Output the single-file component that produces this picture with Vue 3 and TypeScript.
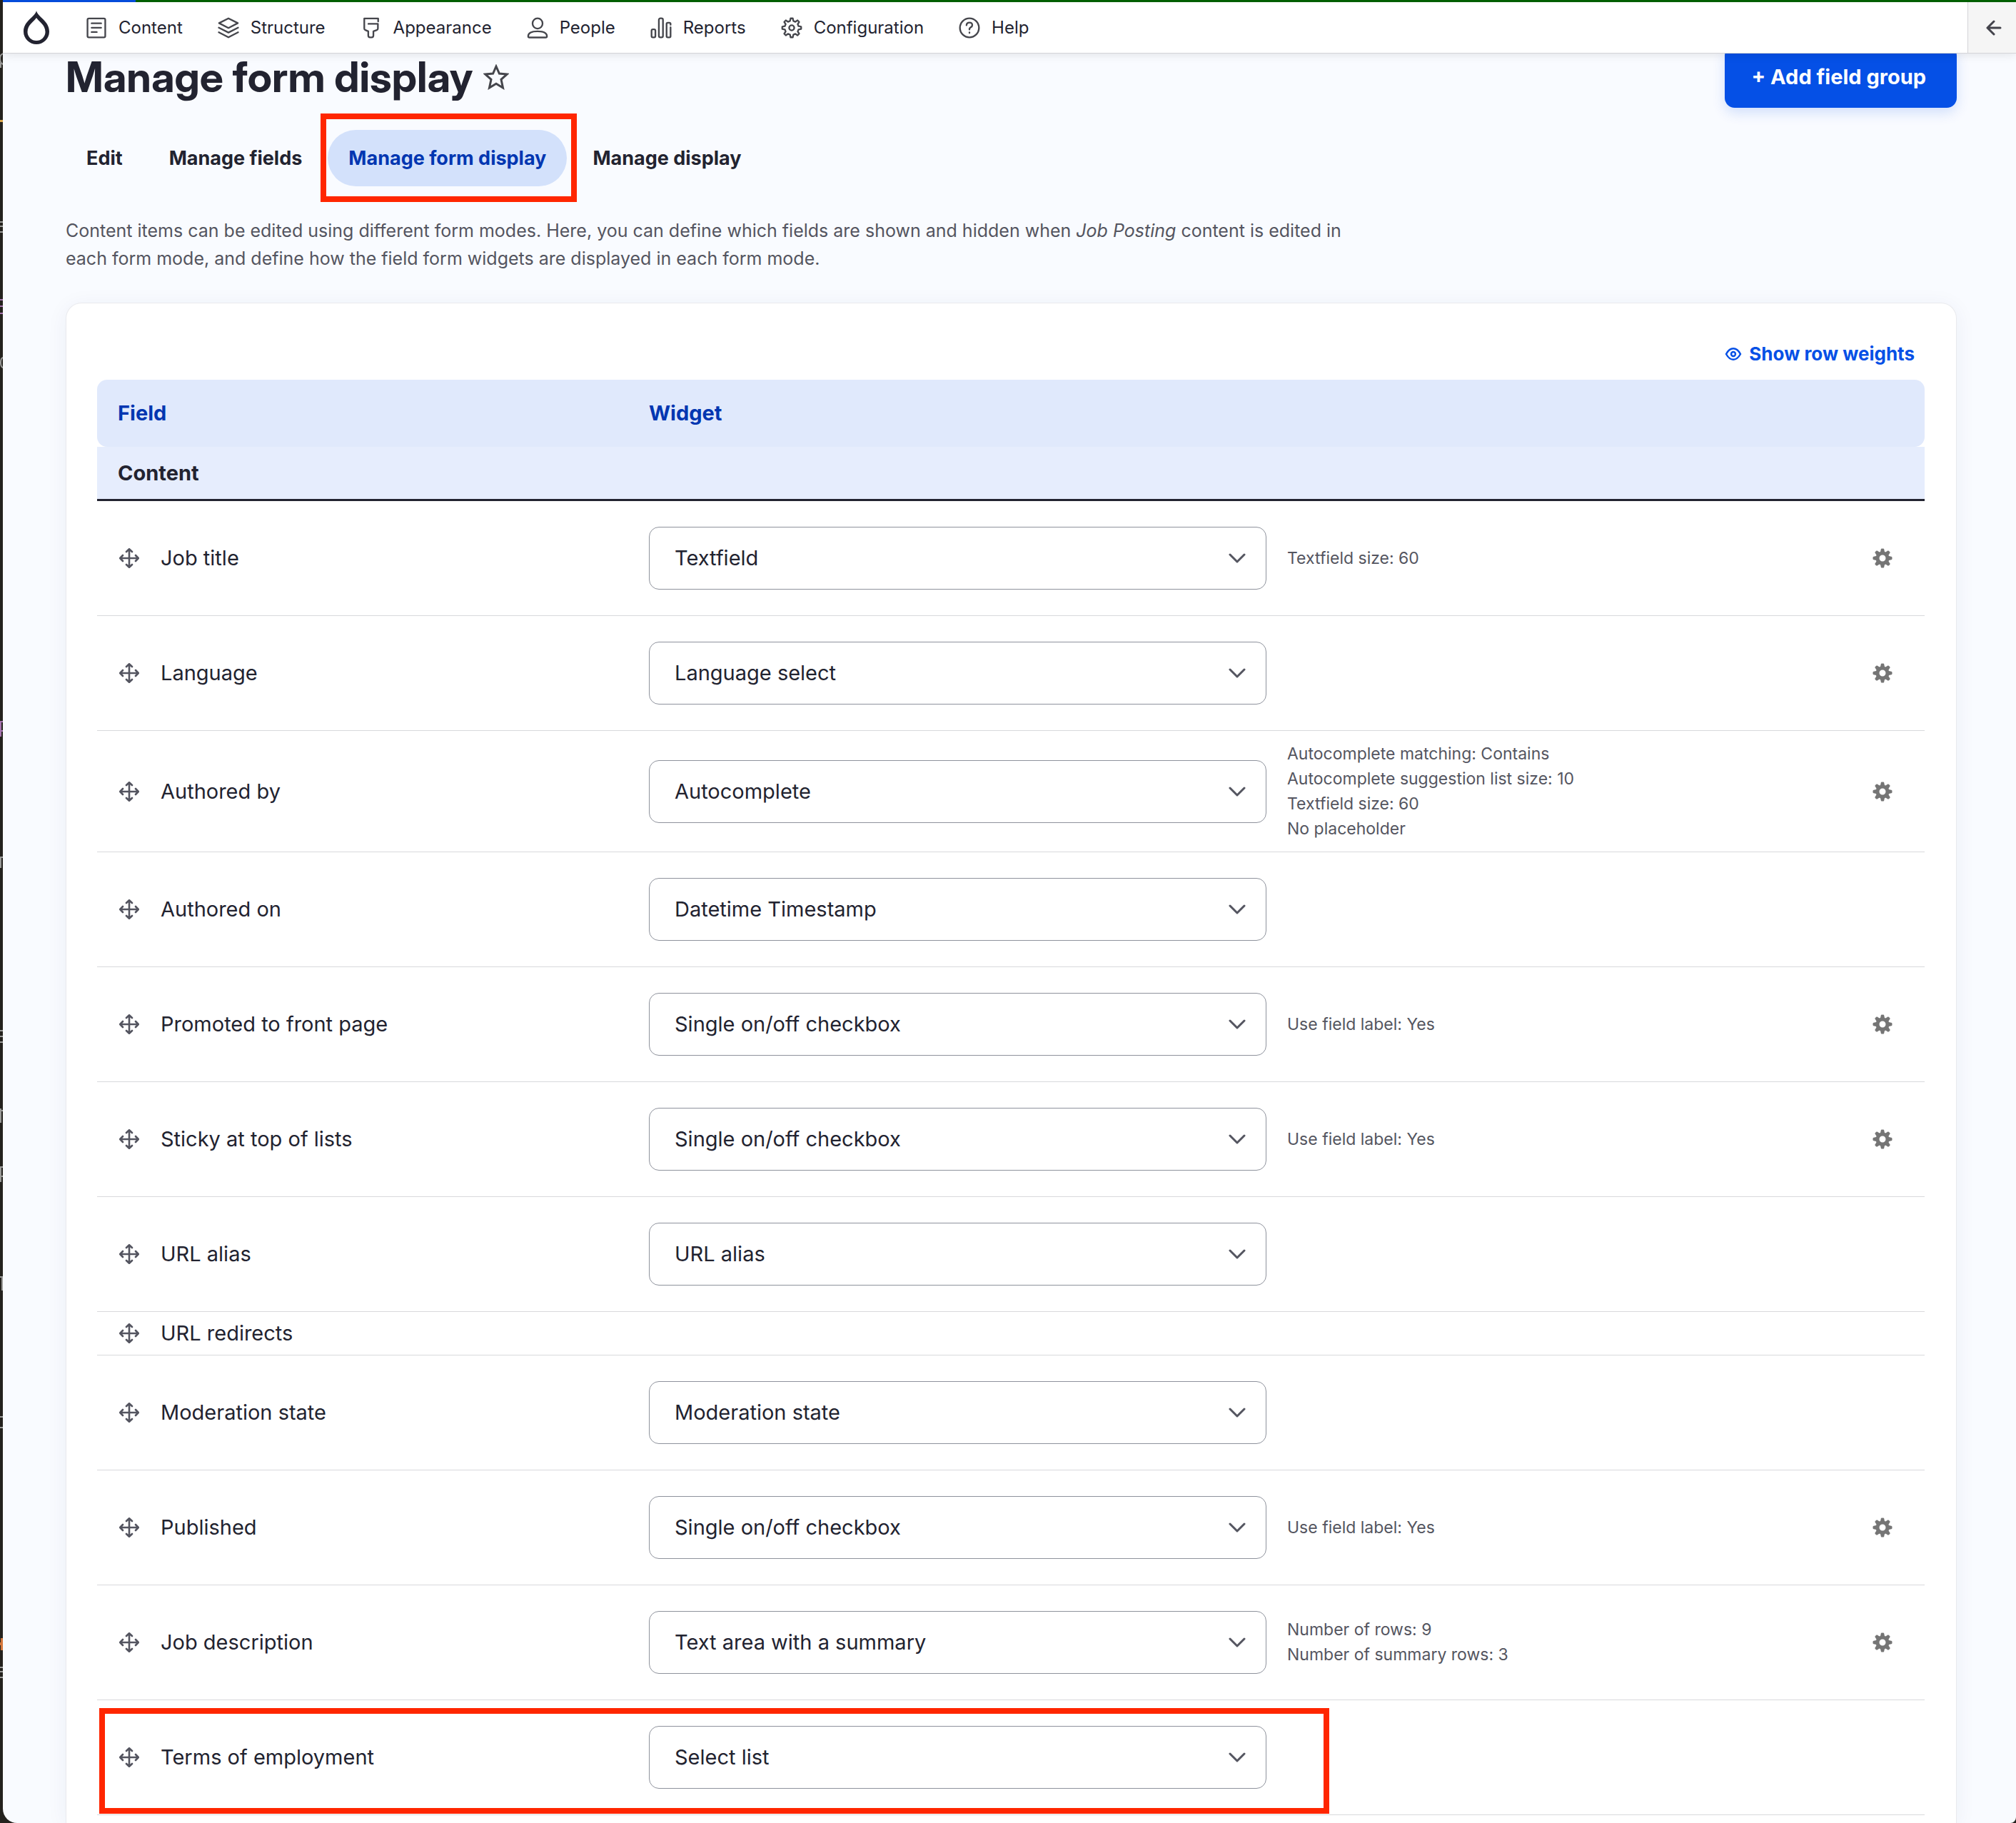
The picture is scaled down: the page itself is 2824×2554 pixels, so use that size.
<script setup lang="ts">
import { ref } from 'vue'

interface NavItem {
  id: string
  label: string
}

interface Tab {
  label: string
  active?: boolean
}

interface FieldRow {
  id: string
  label: string
  widget?: string
  summary?: string[]
  configurable?: boolean
  marked?: boolean
  size?: 'tall' | 'short'
}

const navItems: NavItem[] = [
  { id: 'content', label: 'Content' },
  { id: 'structure', label: 'Structure' },
  { id: 'appearance', label: 'Appearance' },
  { id: 'people', label: 'People' },
  { id: 'reports', label: 'Reports' },
  { id: 'configuration', label: 'Configuration' },
  { id: 'help', label: 'Help' },
]

const tabs: Tab[] = [
  { label: 'Edit' },
  { label: 'Manage fields' },
  { label: 'Manage form display', active: true },
  { label: 'Manage display' },
]

const rows = ref<FieldRow[]>([
  { id: 'title', label: 'Job title', widget: 'Textfield', summary: ['Textfield size: 60'], configurable: true },
  { id: 'langcode', label: 'Language', widget: 'Language select', configurable: true },
  {
    id: 'uid',
    label: 'Authored by',
    widget: 'Autocomplete',
    summary: [
      'Autocomplete matching: Contains',
      'Autocomplete suggestion list size: 10',
      'Textfield size: 60',
      'No placeholder',
    ],
    configurable: true,
    size: 'tall',
  },
  { id: 'created', label: 'Authored on', widget: 'Datetime Timestamp' },
  { id: 'promote', label: 'Promoted to front page', widget: 'Single on/off checkbox', summary: ['Use field label: Yes'], configurable: true },
  { id: 'sticky', label: 'Sticky at top of lists', widget: 'Single on/off checkbox', summary: ['Use field label: Yes'], configurable: true },
  { id: 'path', label: 'URL alias', widget: 'URL alias' },
  { id: 'redirects', label: 'URL redirects', size: 'short' },
  { id: 'moderation', label: 'Moderation state', widget: 'Moderation state' },
  { id: 'status', label: 'Published', widget: 'Single on/off checkbox', summary: ['Use field label: Yes'], configurable: true },
  {
    id: 'body',
    label: 'Job description',
    widget: 'Text area with a summary',
    summary: ['Number of rows: 9', 'Number of summary rows: 3'],
    configurable: true,
  },
  { id: 'terms', label: 'Terms of employment', widget: 'Select list', marked: true },
])

// Outline of a gear: each tooth is a flat top joined to the next by a flat valley.
function gearOutline(teeth: number, outer: number, inner: number): string {
  const step = (Math.PI * 2) / teeth
  const points: string[] = []
  for (let i = 0; i < teeth; i++) {
    const a = i * step - Math.PI / 2
    const corners: [number, number][] = [
      [outer, -0.15],
      [outer, 0.15],
      [inner, 0.3],
      [inner, 0.7],
    ]
    for (const [r, t] of corners) {
      points.push(`${(10 + r * Math.cos(a + t * step)).toFixed(2)} ${(10 + r * Math.sin(a + t * step)).toFixed(2)}`)
    }
  }
  return `M${points.join('L')}Z`
}

const gearPath = gearOutline(8, 7.4, 5.5)
const toothAngles = [0, 45, 90, 135, 180, 225, 270, 315]
</script>

<template>
  <div class="desktop">
    <svg class="backdrop" width="4" height="2400" viewBox="0 0 4 2400" fill="none" stroke-width="2" aria-hidden="true">
      <g stroke="#9a9a98">
        <path d="M5 75Q0 76 0 82T4 90M1 88V95" />
        <path d="M4 311H0M0 317H4M0 325H4" />
        <path d="M4 501Q1 502 1 508T4 515" />
        <path d="M0 1201H4M1 1201V1216" />
        <path d="M4 1444H0M0 1452H4M0 1460H4" />
        <path d="M0 1556H4M1 1553V1573" />
        <path d="M4 1635H1V1656M1 1648H4" />
        <path d="M0 1789H3V1808" />
        <path d="M4 1985H0M0 2000H4" />
        <path d="M4 2336H0M0 2342H4M0 2350H4" />
      </g>
      <path stroke="#d9a44a" stroke-width="3" d="M0 169.500H4" />
      <path stroke="#a574ae" d="M0 420H4M0 429H4M0 439H4M4 1011H1V1032M1 1024H4" />
      <path stroke="#d5773c" stroke-width="4" d="M0 2303H4M3 2295V2312" />
    </svg>

    <div class="window">
      <div class="progress"><span class="progress-done"></span></div>

      <header class="toolbar">
        <a class="logo" href="#" aria-label="Home">
          <svg width="36" height="47" viewBox="0 0 36 47" aria-hidden="true">
            <path
              fill="#222330"
              fill-rule="evenodd"
              d="M18 0C20 9 36 14 36 29.200A18 17.800 0 0 1 0 29.200C0 14 16 9 18 0ZM18 10C15 15 5.500 19.500 5.500 29.800A12.500 12.200 0 0 0 30.500 29.800C30.500 19.500 21 15 18 10Z"
            />
          </svg>
        </a>
        <nav class="nav" aria-label="Administration">
          <a v-for="item in navItems" :key="item.id" class="nav-item" href="#">
            <svg class="nav-icon" viewBox="0 0 20 20" aria-hidden="true">
              <template v-if="item.id === 'content'">
                <rect x="3.100" y="2.700" width="13.800" height="14.700" rx="1" />
                <path d="M6.300 6.500h7.400M6.300 9.900h7.400M6.300 13.300h4" />
              </template>
              <template v-else-if="item.id === 'structure'">
                <path d="M10 2.600L17.300 6.300L10 10.100L2.700 6.300Z" />
                <path d="M2.500 9.900L10 13.700L17.500 9.900M2.500 13.500L10 17.400L17.500 13.500" />
              </template>
              <path
                v-else-if="item.id === 'appearance'"
                d="M15.400 5V2.700H4.600V10.500Q4.600 11.400 5.500 11.700L7.700 12.700V16Q7.700 17.400 9 17.400H10.400Q11.700 17.400 11.700 16V12.700L14.300 11.700Q15.200 11.400 15.200 10.500V6.900H7.800"
              />
              <template v-else-if="item.id === 'people'">
                <ellipse cx="10" cy="6.600" rx="3.900" ry="4" />
                <path d="M2.700 16.500C2.700 13.800 6 12.700 10 12.700S17.300 13.800 17.300 16.500Q17.300 17.500 16.300 17.500H3.700Q2.700 17.500 2.700 16.500Z" />
              </template>
              <template v-else-if="item.id === 'reports'">
                <rect x="2.600" y="11.200" width="3" height="6.200" rx="1" />
                <rect x="8.300" y="2.600" width="3.200" height="14.800" rx="1.200" />
                <path d="M17.400 7.600V6.900Q17.400 6 16.500 6H15.200Q14.300 6 14.300 6.900V16.500Q14.300 17.400 15.200 17.400H16.500Q17.400 17.400 17.400 16.500V9.600" />
              </template>
              <template v-else-if="item.id === 'configuration'">
                <path :d="gearPath" />
                <circle cx="10" cy="10" r="2" />
              </template>
              <template v-else>
                <circle cx="10" cy="10" r="7.400" />
                <path d="M7.700 8Q7.800 5.900 10 5.900T12.200 7.900Q12.200 8.900 11 9.600T10 11.300" />
                <path d="M10 13.500V13.900" />
              </template>
            </svg>
            <span>{{ item.label }}</span>
          </a>
        </nav>
        <button class="collapse" type="button" aria-label="Collapse sidebar">
          <svg width="24" height="24" viewBox="0 0 24 24" aria-hidden="true">
            <path d="M21 12H3M12 3L3 12L12 21" />
          </svg>
        </button>
      </header>

      <main class="page">
        <div class="page-head">
          <h1>Manage form display</h1>
          <button class="star" type="button" aria-label="Add to shortcuts">
            <svg width="36" height="36" viewBox="0 0 36 36" aria-hidden="true">
              <path d="M18 3L22.400 13L33.300 14L25 21.300L27.500 33L18 27.300L8.500 33L11 21.300L2.700 14L13.600 13Z" />
            </svg>
          </button>
          <button class="add" type="button">+ Add field group</button>
        </div>

        <nav class="tabs" aria-label="Primary tabs">
          <a v-for="tab in tabs" :key="tab.label" class="tab" :class="{ active: tab.active }" href="#">
            {{ tab.label }}
            <span v-if="tab.active" class="mark mark-tab"></span>
          </a>
        </nav>

        <p class="intro">
          Content items can be edited using different form modes. Here, you can define which fields are shown and hidden
          when <em>Job Posting</em> content is edited in each form mode, and define how the field form widgets are
          displayed in each form mode.
        </p>

        <section class="card">
          <button class="weights" type="button">
            <svg width="24" height="24" viewBox="0 0 24 24" aria-hidden="true">
              <path d="M2 12C5 6.500 8.500 4.300 12 4.300S19 6.500 22 12C19 17.500 15.500 19.700 12 19.700S5 17.500 2 12Z" />
              <circle cx="12" cy="12" r="3" />
            </svg>
            <span>Show row weights</span>
          </button>

          <table>
            <colgroup>
              <col class="col-field" />
              <col class="col-widget" />
              <col />
              <col class="col-action" />
            </colgroup>
            <thead>
              <tr>
                <th scope="col">Field</th>
                <th scope="col" colspan="3">Widget</th>
              </tr>
            </thead>
            <tbody>
              <tr class="region">
                <td colspan="4">Content</td>
              </tr>
              <tr v-for="row in rows" :key="row.id" class="row" :class="row.size">
                <td class="field">
                  <div class="field-inner">
                    <a class="drag" href="#" :aria-label="`Move ${row.label}`">
                      <svg width="28" height="28" viewBox="0 0 28 28" aria-hidden="true">
                        <path d="M14 1.500V26.500M1.500 14H26.500M10 5L14 1.200L18 5M10 23L14 26.800L18 23M5 10L1.200 14L5 18M23 10L26.800 14L23 18" />
                      </svg>
                    </a>
                    <label v-if="row.widget" :for="`widget-${row.id}`">{{ row.label }}</label>
                    <span v-else>{{ row.label }}</span>
                  </div>
                  <span v-if="row.marked" class="mark mark-row"></span>
                </td>
                <td class="widget">
                  <div v-if="row.widget" class="select">
                    <select :id="`widget-${row.id}`">
                      <option>{{ row.widget }}</option>
                    </select>
                    <svg width="24" height="14" viewBox="0 0 24 14" aria-hidden="true">
                      <path d="M2 2L12 12L22 2" />
                    </svg>
                  </div>
                </td>
                <td class="summary">
                  <div v-for="line in row.summary" :key="line">{{ line }}</div>
                </td>
                <td class="action">
                  <button v-if="row.configurable" class="gear" type="button" :aria-label="`Edit ${row.label} settings`">
                    <svg width="28" height="28" viewBox="-14 -14 28 28" aria-hidden="true">
                      <circle r="7" fill="none" stroke="#757575" stroke-width="5" />
                      <path
                        v-for="angle in toothAngles"
                        :key="angle"
                        fill="#757575"
                        d="M-3.200 -8L-2 -13.200Q0 -14 2 -13.200L3.200 -8Z"
                        :transform="`rotate(${angle})`"
                      />
                    </svg>
                  </button>
                </td>
              </tr>
            </tbody>
          </table>
        </section>
      </main>
    </div>
  </div>
</template>

<style>
body {
  margin: 0;
  background: #24221e;
}
</style>

<style scoped>
* {
  box-sizing: border-box;
}

.desktop {
  position: relative;
  min-height: 100vh;
  padding-left: 4px;
  background: #24221e;
  color: #222330;
  font-family: Inter, "Liberation Sans", sans-serif;
  font-size: 29px;
  line-height: 44px;
}

.backdrop {
  position: absolute;
  top: 0;
  left: 0;
}

a {
  color: inherit;
  text-decoration: none;
}

button,
select {
  margin: 0;
  border: 0;
  padding: 0;
  background: none;
  color: inherit;
  font: inherit;
}

svg {
  display: block;
  flex: none;
}

.window {
  min-height: 100vh;
  border-radius: 0 0 8px 20px;
  overflow: hidden;
  background: #f9fbff;
}

.progress {
  height: 3px;
  background: #006400;
}

.progress-done {
  display: block;
  width: 186px;
  height: 3px;
  background: #0550e6;
}

.toolbar {
  position: relative;
  z-index: 2;
  display: flex;
  align-items: center;
  height: 72px;
  border-bottom: 1px solid #d4d4d8;
  padding-left: 29px;
  background: #fff;
  box-shadow: 0 0 14px rgba(0, 0, 0, 0.12);
}

.nav {
  display: flex;
  flex: 1;
  gap: 46px;
  margin-left: 48px;
}

.nav-item {
  display: flex;
  align-items: center;
  gap: 13px;
  font-size: 24px;
}

.nav-icon {
  width: 36px;
  height: 36px;
  fill: none;
  stroke: #45464c;
  stroke-width: 1.3;
  stroke-linecap: round;
  stroke-linejoin: round;
}

.collapse {
  display: flex;
  align-items: center;
  justify-content: center;
  align-self: stretch;
  width: 68px;
  border-left: 1px solid #d4d4d8;
  padding-left: 4px;
  background: #f5f5f5;
}

.collapse svg {
  fill: none;
  stroke: #43434b;
  stroke-width: 3;
  stroke-linecap: round;
  stroke-linejoin: round;
}

.page {
  margin-top: -11px;
  padding: 0 83px 0 88px;
}

.page-head {
  display: flex;
  align-items: center;
}

h1 {
  margin: 0;
  font-family: "Inter Display", "Inter Tight", Inter, "Liberation Sans", sans-serif;
  font-size: 59px;
  font-weight: 700;
  line-height: 80px;
}

.star {
  margin-left: 14px;
}

.star svg {
  fill: none;
  stroke: #45464c;
  stroke-width: 3;
}

.add {
  height: 87px;
  margin-left: auto;
  border-radius: 14px;
  padding: 0 43px 0 38px;
  background: #0550e6;
  box-shadow: 0 7px 18px rgba(5, 80, 230, 0.16);
  color: #fff;
  font-weight: 700;
}

.tabs {
  display: flex;
  gap: 7px;
  margin-top: 31px;
}

.tab {
  position: relative;
  border-radius: 40px;
  padding: 0 29px;
  font-size: 27px;
  font-weight: 700;
  line-height: 79px;
}

.tab.active {
  background: #d3e1fb;
  color: #0036b1;
}

.mark {
  position: absolute;
  border: 8px solid #ff2600;
  pointer-events: none;
}

.mark-tab {
  inset: -23px -14px -22px -10px;
}

.intro {
  max-width: 1836px;
  margin: 43px 0 42px;
  color: #545560;
  font-size: 25px;
  line-height: 39px;
}

.card {
  border: 1px solid #e9eaee;
  border-bottom: 0;
  border-radius: 22px 22px 0 0;
  padding: 49px 44px 11px 43px;
  background: #fff;
  box-shadow: 0 4px 30px rgba(34, 51, 110, 0.06);
}

.weights {
  display: flex;
  align-items: center;
  gap: 10px;
  margin: 0 14px 14px auto;
  color: #0550e6;
  font-size: 26px;
  font-weight: 700;
}

.weights svg {
  fill: none;
  stroke: #0550e6;
  stroke-width: 2.4;
}

table {
  width: 100%;
  border-spacing: 0;
  table-layout: fixed;
}

.col-field {
  width: 744px;
}

.col-widget {
  width: 894px;
}

.col-action {
  width: 88px;
}

th {
  height: 94px;
  padding: 0 29px;
  background: #e0e9fc;
  color: #0036b1;
  font-weight: 700;
  text-align: left;
}

th:first-child {
  border-radius: 14px 0 0 14px;
}

th:last-child {
  border-radius: 0 14px 14px 0;
}

td {
  padding: 0;
}

.region td {
  height: 76px;
  border-bottom: 3px solid #222330;
  padding: 0 29px;
  background: #e6edfd;
  font-weight: 700;
}

.row td {
  height: 161px;
  border-bottom: 1px solid #d8d9dc;
}

.row.tall td {
  height: 170px;
}

.row.short td {
  height: 61px;
}

.field {
  position: relative;
}

.field-inner {
  display: flex;
  align-items: center;
  gap: 30px;
  padding-left: 31px;
}

.drag svg {
  fill: none;
  stroke: #545560;
  stroke-width: 2.6;
  stroke-linecap: round;
  stroke-linejoin: round;
}

.mark-row {
  top: 11px;
  bottom: 1px;
  left: 3px;
  z-index: 1;
  width: 1723px;
}

.widget {
  padding-left: 29px;
}

.select {
  display: grid;
  align-items: center;
}

.select select,
.select svg {
  grid-area: 1 / 1;
}

.select select {
  width: 100%;
  height: 88px;
  border: 1px solid #8e929c;
  border-radius: 14px;
  padding: 0 72px 0 35px;
  background: #fff;
  appearance: none;
}

.select svg {
  justify-self: end;
  margin-right: 29px;
  fill: none;
  stroke: #545560;
  stroke-width: 3;
  stroke-linecap: round;
  stroke-linejoin: round;
  pointer-events: none;
}

.summary {
  padding-left: 29px;
  color: #545560;
  font-size: 23px;
  line-height: 35px;
}

.action {
  padding-left: 15px;
}

.gear {
  display: block;
}
</style>
